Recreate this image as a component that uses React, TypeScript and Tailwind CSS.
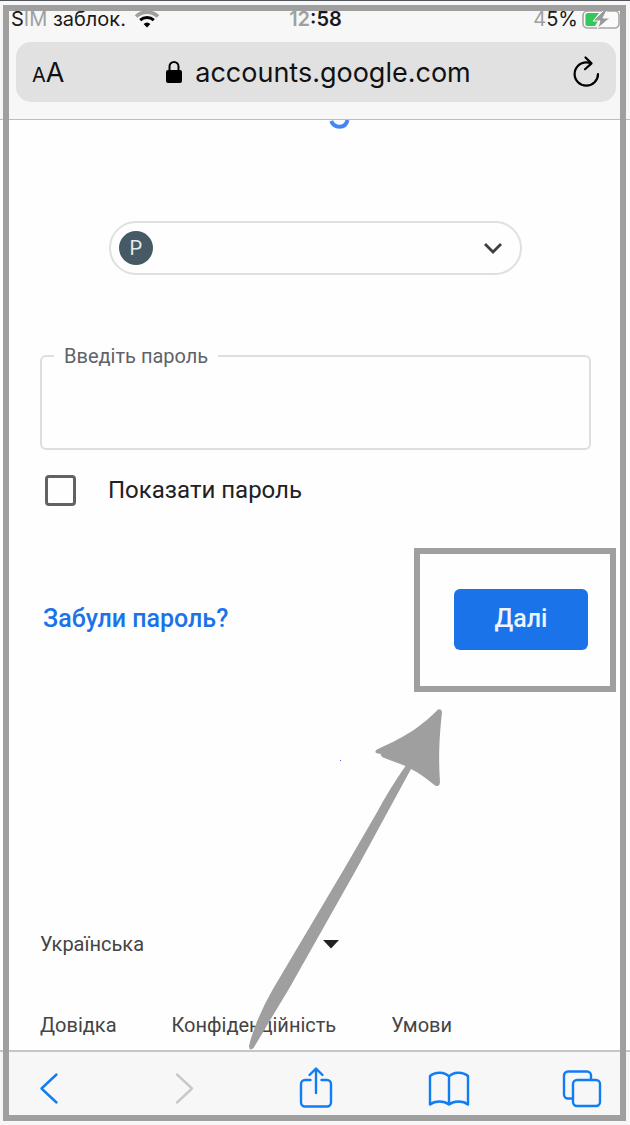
import type { ReactNode } from "react";

const FOOTER_LINKS = ["Довідка", "Конфіденційність", "Умови"];

function WifiIcon() {
  return (
    <svg width="26" height="18" viewBox="0 0 26 18" fill="none" aria-hidden="true">
      <path d="M2 6.5a16 16 0 0 1 22 0" stroke="#9f9f9f" strokeWidth="3.6" />
      <path d="M6.2 10.2a10 10 0 0 1 13.6 0" stroke="#000" strokeWidth="3" />
      <path d="M9.6 14a5 5 0 0 1 6.8 0L13 17.4z" fill="#000" />
    </svg>
  );
}

function BatteryIcon() {
  return (
    <svg width="38" height="19" viewBox="0 0 38 19" aria-hidden="true">
      <rect x="1" y="1" width="36" height="17" rx="4.5" fill="#fafafa" stroke="#a6a6a6" strokeWidth="1.6" />
      <path d="M6 3h11l-6 8h5l-3 5H6a2.6 2.6 0 0 1-2.6-2.6V5.6A2.6 2.6 0 0 1 6 3z" fill="#34c759" />
      <path d="M22 0L11 11h7l-2.500 7.500L28 8h-7l4-8z" fill="#9a9a9a" stroke="#fafafa" strokeWidth="1" />
    </svg>
  );
}

function StatusBar() {
  return (
    <div className="grid grid-cols-3 items-center pl-[11px] pr-[10px] text-[20px] leading-5 text-[#1a1a1a]">
      <div className="flex items-center gap-2 whitespace-nowrap">
        <span>
          S<span className="text-[#9f9f9f]">IM</span> заблок.
        </span>
        <WifiIcon />
      </div>
      <div className="text-center font-semibold">
        <span className="text-[#9f9f9f]">12</span>:58
      </div>
      <div className="flex items-center justify-end gap-1">
        <span>
          <span className="text-[#9f9f9f]">4</span>5%
        </span>
        <BatteryIcon />
      </div>
    </div>
  );
}

function AddressBar() {
  return (
    <div className="mt-[13px] ml-4 mr-[14px] flex h-[60px] items-center justify-between rounded-[15px] bg-[#e1e1e1] pl-4 pr-3 text-[#111]">
      <button type="button" aria-label="Розмір тексту" className="flex w-9 items-baseline pt-1 leading-8">
        <span className="text-[20px]">A</span>
        <span className="text-[27px]">A</span>
      </button>
      <div className="flex items-center gap-3">
        <svg width="18" height="24" viewBox="0 0 18 24" aria-hidden="true">
          <rect x="1" y="10" width="16" height="13" rx="2" fill="#000" />
          <path d="M4.5 11V6.500a4.500 4.500 0 0 1 9 0V11" fill="none" stroke="#000" strokeWidth="2" />
        </svg>
        <span className="pt-0.5 text-[27px] leading-8">accounts.google.com</span>
      </div>
      <button type="button" aria-label="Оновити" className="flex w-9 justify-center">
        <svg width="30" height="34" viewBox="0 0 30 34" fill="none" stroke="#000" strokeWidth="2.2" strokeLinecap="round" strokeLinejoin="round" aria-hidden="true">
          <path d="M27 19A11.700 11.700 0 1 1 15.300 7.300q2.500 0 4.700 1" />
          <path d="M14.500 2.500l6 5.900-6.500 5.800" />
        </svg>
      </button>
    </div>
  );
}

function Arrow() {
  return (
    <svg
      className="pointer-events-none absolute top-[146px] -left-[180px]"
      width="210"
      height="356"
      viewBox="240 700 210 356"
      fill="#9f9f9f"
      aria-hidden="true"
    >
      <path d="M438 709.5Q441.500 708.500 442 712C440 730 438 755 440 782Q439.500 787.500 435 785.500C427 779 419 773 411 769L356 870L290 987L253.500 1048Q249.500 1051.500 249 1046.500Q250 1040 255 1027Q262 1008 273 989L343.500 870L376 814Q390 788 405.500 766C398 763 389 760 382 757L380.500 754L376 753Q374.500 751 377 749.500C402 738 419 729 438 709.500Z" />
      <path d="M340 760h1v1h-1z" fill="#5b5bff" />
    </svg>
  );
}

function ToolButton({ label, disabled, children }: { label: string; disabled?: boolean; children: ReactNode }) {
  return (
    <button
      type="button"
      aria-label={label}
      disabled={disabled}
      className="flex h-11 w-11 items-center justify-center text-[#117df5] disabled:text-[#c9c9c9]"
    >
      <svg width="44" height="44" viewBox="0 0 44 44" fill="none" stroke="currentColor" strokeWidth="2.4" strokeLinecap="round" strokeLinejoin="round" aria-hidden="true">
        {children}
      </svg>
    </button>
  );
}

function Toolbar() {
  return (
    <nav className="flex h-[75px] items-start justify-between border-t-2 border-[#c6c6c6] bg-[#f7f7f7] pt-[13px] pl-[27px] pr-[26px]">
      <ToolButton label="Назад">
        <path d="M29.500 9.500L14.500 23.500l15 14" />
      </ToolButton>
      <ToolButton label="Вперед" disabled>
        <path d="M17 9.500l15 14-15 14" />
      </ToolButton>
      <ToolButton label="Поділитися">
        <path d="M16.500 15H11a4 4 0 0 0-4 4v18.500a4 4 0 0 0 4 4h22a4 4 0 0 0 4-4V19a4 4 0 0 0-4-4h-5.500" />
        <path d="M22 28V4M15.500 10L22 3.500l6.500 6.500" />
      </ToolButton>
      <ToolButton label="Закладки">
        <path d="M22 11.500C18 6.500 8 6.500 3 11v28.500c5-4 14-4 19 0 5-4 14-4 19 0V11C36 6.500 26 6.500 22 11.500zM22 11.500v28" />
      </ToolButton>
      <ToolButton label="Вкладки">
        <rect x="13" y="15" width="27" height="26" rx="4" />
        <path d="M12 33.500H8a4 4 0 0 1-4-4V10.500a4 4 0 0 1 4-4h19a4 4 0 0 1 4 4V14" />
      </ToolButton>
    </nav>
  );
}

export default function App() {
  return (
    <div className="relative flex min-h-screen flex-col overflow-hidden bg-[#fefefe] font-['Roboto',sans-serif]">
      <header className="border-t border-b border-t-[#50565c] border-b-[#bdbdbd] bg-[#f7f7f7] pt-2 pb-[17px] font-['Inter',sans-serif]">
        <StatusBar />
        <AddressBar />
      </header>

      <main className="flex flex-1 flex-col pl-10 pr-[39px]">
        {/* bottom of the logo, scrolled under the header */}
        <svg className="mx-auto" width="112" height="10" viewBox="0 0 112 10" fill="none" aria-label="Google">
          <path d="M71.200 1q2.300 5.700 8.300 5.700 6.500 0 8-6.700" stroke="#4285f4" strokeWidth="4" />
        </svg>

        <button
          type="button"
          aria-label="Обліковий запис"
          className="mx-auto mt-[91px] flex h-[54px] w-3/4 items-center justify-between rounded-full border-2 border-[#e0e0e0] pl-2 pr-[17px]"
        >
          <span className="flex h-[34px] w-[34px] items-center justify-center rounded-full bg-[#455a64] text-[20px] text-[#e6eaec]">
            P
          </span>
          <svg width="20" height="14" viewBox="0 0 20 14" fill="none" stroke="#3c4043" strokeWidth="2.8" aria-hidden="true">
            <path d="M2 3l8 8 8-8" />
          </svg>
        </button>

        <form className="mt-[69px]" onSubmit={(e) => e.preventDefault()}>
          <fieldset className="h-[106px] rounded-md border-2 border-[#dcdee0] pl-3">
            <legend className="px-[10px] text-[20px] leading-6 text-[#5f6368]">
              <label htmlFor="password">Введіть пароль</label>
            </legend>
            <input
              id="password"
              type="password"
              className="h-[70px] w-full bg-transparent px-[10px] text-2xl text-[#202124] outline-none"
            />
          </fieldset>

          <div className="mt-6 flex items-center gap-8 pl-[5px]">
            <input
              id="show"
              type="checkbox"
              className="h-[31px] w-[31px] appearance-none rounded-sm border-3 border-[#5f6368] checked:bg-[#1a73e8]"
            />
            <label htmlFor="show" className="text-2xl text-[#202124]">
              Показати пароль
            </label>
          </div>

          <div className="mt-[42px] -mr-[25px] flex items-center justify-between">
            <a href="#forgot" className="pb-0.5 pl-[3px] text-[25px] font-medium text-[#1a73e8]">
              Забули пароль?
            </a>
            <div className="relative border-6 border-[#9f9f9f] pt-[35px] pb-9 pl-[34px] pr-[22px]">
              <button
                type="submit"
                className="h-[61px] w-[134px] rounded-md bg-[#1a73e8] pb-0.5 text-[25px] font-medium text-[#eef4fd]"
              >
                Далі
              </button>
              <Arrow />
            </div>
          </div>
        </form>

        <footer className="mt-auto pb-[13px] text-[20px] leading-6 text-[#444]">
          <div className="relative w-[300px]">
            <select aria-label="Мова" className="w-full appearance-none bg-transparent outline-none">
              <option>Українська</option>
            </select>
            <svg className="pointer-events-none absolute top-2 right-0" width="18" height="9" viewBox="0 0 18 9" aria-hidden="true">
              <path d="M1 0h16L9 8.500z" fill="#202124" />
            </svg>
          </div>
          <div className="mt-[57px] flex gap-[55px]">
            {FOOTER_LINKS.map((link) => (
              <a key={link} href="#info">
                {link}
              </a>
            ))}
          </div>
        </footer>
      </main>

      <Toolbar />

      <div className="pointer-events-none absolute top-[5px] right-1 bottom-1 left-[3px] border-6 border-[#9f9f9f]" />
    </div>
  );
}
